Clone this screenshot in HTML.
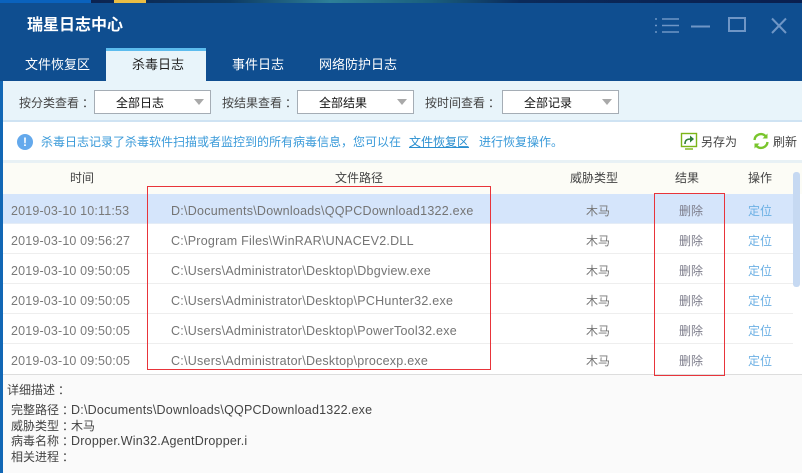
<!DOCTYPE html>
<html lang="zh"><head><meta charset="utf-8"><style>
html,body{margin:0;padding:0;width:802px;height:473px;overflow:hidden;background:#fff}
body{position:relative;font:12px "Liberation Sans","Noto Sans CJK SC",sans-serif;color:#333}
.a{position:absolute;white-space:nowrap;line-height:16px}
.b{position:absolute}
.c{font-family:"Noto Sans CJK TC",sans-serif;position:relative;left:3px}
.l{font-size:12.5px;letter-spacing:.22px}
.sel{position:absolute;top:90px;height:24px;box-sizing:border-box;border:1px solid #a5adb5;background:#fff;color:#111;text-align:center;line-height:24px;font-size:12px;padding-right:25px}
.sel i{position:absolute;right:6px;top:8px;width:0;height:0;border-left:5px solid transparent;border-right:5px solid transparent;border-top:6px solid #a9a9a9}
.row{position:absolute;left:3px;width:790px;height:30px;border-bottom:1px solid #eee;box-sizing:border-box}
.d,.p,.t,.r,.o{position:absolute;top:9px;line-height:16px;white-space:nowrap;font-size:12px}
.d{left:8px;color:#7a7a7a;font-size:12.5px;letter-spacing:.16px}.p{left:168px;color:#747474;font-size:12.5px;letter-spacing:.25px}
.t{left:583px;color:#777}.r{left:676px;color:#7c7c8a}.o{left:745px;color:#6cb0e4}
.h{position:absolute;top:170px;line-height:16px;color:#444;font-size:12px}
</style></head><body>
<div class="b" style="left:0;top:0;width:802px;height:3px;background:linear-gradient(90deg,#0a62bd 0,#0a62bd 91px,#0c2350 91px,#0d3a63 230px,#2d7f98 330px,#1a5f7e 430px,#0b2a5a 520px,#0a1f4f 802px)"></div>
<div class="b" style="left:114px;top:0;width:32px;height:3px;background:#e9bd45"></div>
<div class="b" style="left:0;top:3px;width:802px;height:78px;background:#0f4e90"></div>
<div class="b" style="left:0;top:81px;width:3px;height:392px;background:#1167b5"></div>
<div class="a" style="left:27px;top:16px;font-size:16px;line-height:20px;color:#fff;font-weight:bold">瑞星日志中心</div>
<svg class="b" style="left:650px;top:10px" width="152" height="30" fill="none" stroke="#6f96c6" stroke-width="2">
<path d="M5 9h2M5 15.500h2M5 22h2M12 9h17M12 15.500h17M12 22h17" stroke-width="1.600"/>
<path d="M41 16.500h19"/>
<rect x="79" y="8" width="16" height="13"/>
<path d="M122 8.500l14 14.500M136 8.500l-14 14.500"/>
</svg>
<div class="b" style="left:106px;top:48px;width:100px;height:33px;background:#e8f4fa"></div>
<div class="b" style="left:106px;top:48px;width:100px;height:3px;background:#5cbcee"></div>
<div class="a" style="left:25px;top:57px;font-size:13px;color:#fff">文件恢复区</div>
<div class="a" style="left:132px;top:57px;font-size:13px;color:#222">杀毒日志</div>
<div class="a" style="left:232px;top:57px;font-size:13px;color:#fff">事件日志</div>
<div class="a" style="left:319px;top:57px;font-size:13px;color:#fff">网络防护日志</div>

<div class="b" style="left:3px;top:81px;width:799px;height:39px;background:#e8f4fa"></div>
<div class="a" style="left:19px;top:95px;color:#444">按分类查看<span class="c">：</span></div>
<div class="sel" style="left:94px;width:117px">全部日志<i></i></div>
<div class="a" style="left:222px;top:95px;color:#444">按结果查看<span class="c">：</span></div>
<div class="sel" style="left:297px;width:117px">全部结果<i></i></div>
<div class="a" style="left:425px;top:95px;color:#444">按时间查看<span class="c">：</span></div>
<div class="sel" style="left:502px;width:117px">全部记录<i></i></div>

<div class="b" style="left:3px;top:120px;width:799px;height:2px;background:#cfe3f3"></div>
<div class="b" style="left:3px;top:160px;width:799px;height:3px;background:#e8f1f5"></div>
<div class="b" style="left:17px;top:134px;width:16px;height:16px;border-radius:50%;background:#64a9ec;color:#fff;text-align:center;line-height:16px;font-weight:bold;font-size:12px">!</div>
<div class="a" style="left:41px;top:134px;color:#3a9ad9">杀毒日志记录了杀毒软件扫描或者监控到的所有病毒信息<span class="c" style="left:0">，</span>您可以在</div>
<div class="a" style="left:409px;top:134px;color:#2a8fd0;text-decoration:underline">文件恢复区</div>
<div class="a" style="left:479px;top:134px;color:#3a9ad9">进行恢复操作。</div>
<svg class="b" style="left:680px;top:132px" width="20" height="20" fill="none">
<rect x="1.500" y="1.500" width="15" height="13" stroke="#7cb518" stroke-width="1.400"/>
<path d="M5 17h8" stroke="#7cb518" stroke-width="1.400"/>
<path d="M5 12c0-4 2-5 6-5" stroke="#2f7f3a" stroke-width="1.600"/>
<path d="M10 3.500l4 3.500-4 3.500z" fill="#2f7f3a"/>
</svg>
<div class="a" style="left:701px;top:134px;color:#444">另存为</div>
<svg class="b" style="left:752px;top:132px" width="18" height="18" fill="none" stroke="#79c52c" stroke-width="2.400">
<path d="M2.500 8a6.500 6.500 0 0 1 11-4"/><path d="M15.500 10a6.500 6.500 0 0 1-11 4"/>
<path d="M15.500 1.500v5h-5z" fill="#79c52c" stroke="none"/><path d="M2.500 16.500v-5h5z" fill="#79c52c" stroke="none"/>
</svg>
<div class="a" style="left:773px;top:134px;color:#444">刷新</div>

<div class="b" style="left:3px;top:163px;width:799px;height:31px;background:#fcfcf6"></div>
<div class="h" style="left:70px">时间</div>
<div class="h" style="left:335px">文件路径</div>
<div class="h" style="left:570px">威胁类型</div>
<div class="h" style="left:675px">结果</div>
<div class="h" style="left:748px">操作</div>

<div class="row" style="top:194px;background:#d5e5fb;border-bottom-color:#e4ecf6"><span class="d">2019-03-10 10:11:53</span><span class="p">D:\Documents\Downloads\QQPCDownload1322.exe</span><span class="t">木马</span><span class="r">删除</span><span class="o">定位</span></div>
<div class="row" style="top:224px"><span class="d">2019-03-10 09:56:27</span><span class="p">C:\Program Files\WinRAR\UNACEV2.DLL</span><span class="t">木马</span><span class="r">删除</span><span class="o">定位</span></div>
<div class="row" style="top:254px"><span class="d">2019-03-10 09:50:05</span><span class="p">C:\Users\Administrator\Desktop\Dbgview.exe</span><span class="t">木马</span><span class="r">删除</span><span class="o">定位</span></div>
<div class="row" style="top:284px"><span class="d">2019-03-10 09:50:05</span><span class="p">C:\Users\Administrator\Desktop\PCHunter32.exe</span><span class="t">木马</span><span class="r">删除</span><span class="o">定位</span></div>
<div class="row" style="top:314px"><span class="d">2019-03-10 09:50:05</span><span class="p">C:\Users\Administrator\Desktop\PowerTool32.exe</span><span class="t">木马</span><span class="r">删除</span><span class="o">定位</span></div>
<div class="row" style="top:344px;border-bottom:0"><span class="d">2019-03-10 09:50:05</span><span class="p">C:\Users\Administrator\Desktop\procexp.exe</span><span class="t">木马</span><span class="r">删除</span><span class="o">定位</span></div>
<div class="b" style="left:793px;top:172px;width:7px;height:115px;border-radius:3px;background:#c6d9f2"></div>

<div class="b" style="left:3px;top:374px;width:799px;height:99px;background:#fafafa;border-top:1px solid #ddd;box-sizing:border-box"></div>
<div class="a" style="left:7px;top:382px;color:#444">详细描述<span class="c">：</span></div>
<div class="a" style="left:11px;top:402px;color:#444">完整路径<span class="c">：</span><span class="l">D:\Documents\Downloads\QQPCDownload1322.exe</span></div>
<div class="a" style="left:11px;top:418px;color:#444">威胁类型<span class="c">：</span>木马</div>
<div class="a" style="left:11px;top:433px;color:#444">病毒名称<span class="c">：</span><span class="l">Dropper.Win32.AgentDropper.i</span></div>
<div class="a" style="left:11px;top:449px;color:#444">相关进程<span class="c">：</span></div>

<div class="b" style="left:147px;top:186px;width:344px;height:184px;box-sizing:border-box;border:1px solid #e8343a"></div>
<div class="b" style="left:654px;top:193px;width:71px;height:183px;box-sizing:border-box;border:1px solid #e8343a"></div>
</body></html>
